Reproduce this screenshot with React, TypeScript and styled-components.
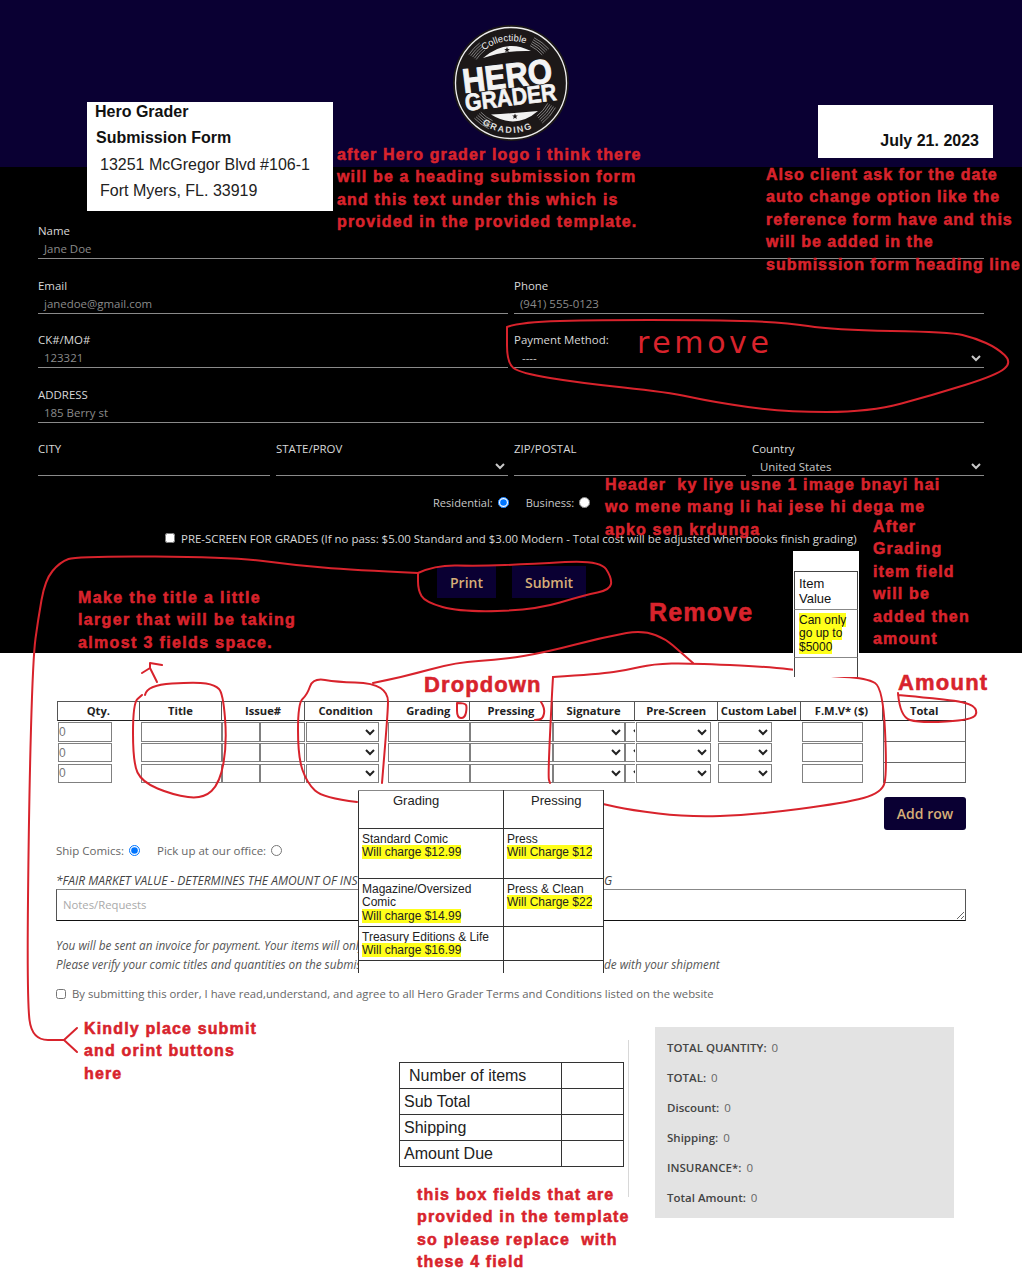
import React from "react";
import styled, { createGlobalStyle } from "styled-components";

const Global = createGlobalStyle`
  html, body { margin: 0; padding: 0; background: #fff; }
  * { box-sizing: border-box; }
`;

const UI = `"Open Sans", "Noto Sans", sans-serif`;
const ARIAL = `"Liberation Sans", Arial, sans-serif`;
const NAVY = "#0a0033";
const RED = "#d8232c";

const Page = styled.div`
  position: relative;
  width: 1022px;
  height: 1280px;
  overflow: hidden;
  font-family: ${UI};
`;
const Header = styled.header`
  height: 167px;
  background: ${NAVY};
  display: flex;
  justify-content: center;
  padding-top: 23px;
`;
const LogoSvg = styled.svg`
  width: 120px;
  height: 120px;
  display: block;
`;
const Dark = styled.section`
  height: 486px;
  background: #000;
  padding: 56px 38px 0;
  color: #d8d8d8;
  font-size: 11.45px;
`;
const Fields = styled.div`
  display: grid;
  grid-template-columns: repeat(4, 1fr);
  column-gap: 6px;
  row-gap: 18.5px;
`;
const Field = styled.div<{ $span: number }>`
  grid-column: span ${(p) => p.$span};
`;
const FieldLabel = styled.div`
  height: 16px;
  line-height: 16px;
  color: #d8d8d8;
`;
const FieldValue = styled.div<{ $short?: boolean }>`
  height: ${(p) => (p.$short ? 19 : 20)}px;
  line-height: 19px;
  padding-left: 6px;
  color: #8b8b8b;
  border-bottom: 1px solid #8a8a8a;
`;
const FieldSelect = styled.select<{ $short?: boolean }>`
  display: block;
  width: 100%;
  height: ${(p) => (p.$short ? 19 : 20)}px;
  padding: 0 0 0 4px;
  font: 11.45px ${UI};
  color: #c8c8c8;
  background: transparent;
  color-scheme: dark;
  border: none;
  border-bottom: 1px solid #8a8a8a;
  border-radius: 0;
  outline: none;
`;
const ChoiceRow = styled.div`
  display: flex;
  align-items: center;
  height: 16px;
  margin: 18px 0 0 395px;
  font-size: 11.1px;
  color: #c8c8c8;
`;
const Choice = styled.label`
  display: flex;
  align-items: center;
  margin-right: 17px;
`;
const Radio = styled.input.attrs({ type: "radio" })`
  width: 11px;
  height: 11px;
  margin: 0 0 0 5px;
`;
const PreScreen = styled.label`
  display: flex;
  align-items: center;
  height: 16px;
  margin: 20px 0 0 127px;
  color: #d8d8d8;
  white-space: nowrap;
`;
const Check = styled.input.attrs({ type: "checkbox" })`
  width: 10px;
  height: 10px;
  margin: 0 6px 0 0;
`;
const Buttons = styled.div`
  display: flex;
  gap: 16px;
  margin: 20px 0 0 399px;
`;
const DarkButton = styled.button`
  height: 32px;
  padding: 0 13px;
  background: ${NAVY};
  color: #d6ae78;
  border: none;
  font: 600 14px ${UI};
`;
const Light = styled.section`
  height: 627px;
  background: #fff;
  padding: 48px 56px 0;
  color: #555;
  font-size: 11.3px;
  display: flex;
  flex-direction: column;
`;
const ItemTable = styled.table`
  width: 909px;
  margin-left: 1px;
  table-layout: fixed;
  border-collapse: separate;
  border-spacing: 0;
`;
const Th = styled.th`
  height: 20px;
  padding: 0 0 1px;
  font: 700 11.2px ${UI};
  color: #222;
  text-align: center;
  border: 1px solid #555;
  border-left-width: 0;
  border-bottom-color: #222;
  &:first-child { border-left-width: 1px; }
`;
const Td = styled.td`
  height: 20.8px;
  padding: 0;
  vertical-align: top;
  overflow: hidden;
`;
const TotalTd = styled(Td)`
  border-left: 1px solid #666;
  border-right: 1px solid #666;
  border-bottom: 1px solid #666;
`;
const CellInner = styled.div<{ $inset?: number }>`
  display: flex;
  padding: 1px 0 0 ${(p) => p.$inset ?? 0}px;
`;
const CellInput = styled.input<{ $w?: number }>`
  display: block;
  flex: ${(p) => (p.$w ? `0 0 ${p.$w}px` : "1 1 0")};
  min-width: 0;
  height: 19.6px;
  padding: 0;
  border: 1px solid #808080;
  border-radius: 0;
  font: 12px ${ARIAL};
  color: #777;
  background: #fff;
`;
const CellSelect = styled.select<{ $w: number }>`
  display: block;
  flex: 0 0 ${(p) => p.$w}px;
  height: 19.6px;
  padding: 0;
  border: 1px solid #808080;
  border-radius: 0;
  background: #fff;
  color: #222;
  font: 11px ${UI};
`;
const AddRow = styled.button`
  align-self: flex-end;
  width: 82px;
  height: 33px;
  margin-top: 13.4px;
  background: ${NAVY};
  color: #d6ae78;
  border: none;
  border-radius: 3px;
  font: 600 14px ${UI};
`;
const ShipRow = styled.div`
  display: flex;
  align-items: center;
  height: 16px;
  margin-top: 13px;
  font-size: 11.5px;
  color: #666;
`;
const ShipChoice = styled.label`
  display: flex;
  align-items: center;
  margin-right: 17px;
`;
const FmvNote = styled.div`
  height: 16px;
  line-height: 16px;
  margin-top: 14px;
  font-size: 12px;
  font-style: italic;
  white-space: nowrap;
  color: #444;
`;
const Notes = styled.textarea`
  display: block;
  width: 910px;
  height: 32px;
  padding: 7px 6px;
  border: 1px solid #555;
  border-top-color: #888;
  border-bottom-color: #111;
  border-radius: 0;
  background: #fff;
  font: 11.3px ${UI};
  &::placeholder { color: #aaa; }
`;
const Terms = styled.p`
  margin: 15px 0 0;
  font-size: 11.75px;
  font-style: italic;
  line-height: 19px;
  color: #555;
  white-space: nowrap;
`;
const Agree = styled.label`
  display: flex;
  align-items: center;
  height: 16px;
  margin-top: 12px;
  color: #666;
  white-space: nowrap;
`;
const AgreeCheck = styled(Check)`
  margin: 0 6px 0 0;
`;
const Bottom = styled.div`
  display: flex;
  align-items: flex-start;
  margin-top: 25px;
  padding-left: 343px;
`;
const DueTable = styled.table`
  width: 225px;
  margin-top: 35px;
  table-layout: fixed;
  border-collapse: collapse;
  font: 16px ${ARIAL};
  color: #222;
`;
const DueLabel = styled.td<{ $indent?: boolean }>`
  width: 162px;
  height: 26px;
  padding: 2px 0 0 ${(p) => (p.$indent ? 9 : 4)}px;
  border: 1px solid #333;
`;
const DueValue = styled.td`
  border: 1px solid #333;
`;
const Divider = styled.div`
  width: 1px;
  height: 157px;
  margin: 13px 26px 0 4px;
  background: #d8d8d8;
`;
const Summary = styled.aside`
  width: 299px;
  height: 191px;
  padding: 13px 12px;
  background: #e3e3e3;
  display: flex;
  flex-direction: column;
  gap: 14px;
  font-size: 11.5px;
`;
const SummaryRow = styled.div`
  height: 16px;
  line-height: 16px;
  font-weight: 600;
  color: #444;
`;
const SummaryNum = styled.span`
  margin-left: 5px;
  font-weight: 400;
  color: #666;
`;
const Scribble = styled.svg`
  position: absolute;
  left: 0;
  top: 0;
  width: 1022px;
  height: 1280px;
  pointer-events: none;
`;
const Paper = styled.div<{ $x: number; $y: number; $w: number; $h: number }>`
  position: absolute;
  left: ${(p) => p.$x}px;
  top: ${(p) => p.$y}px;
  width: ${(p) => p.$w}px;
  height: ${(p) => p.$h}px;
  background: #fff;
  color: #111;
  font-family: ${ARIAL};
`;
const FirmLine = styled.div<{ $bold?: boolean; $pad: number }>`
  height: 26.3px;
  line-height: 20px;
  padding-left: ${(p) => p.$pad}px;
  font-size: 16px;
  font-weight: ${(p) => (p.$bold ? 700 : 400)};
  color: ${(p) => (p.$bold ? "#111" : "#222")};
`;
const DateText = styled.div`
  display: flex;
  justify-content: flex-end;
  align-items: flex-end;
  height: 100%;
  padding: 0 14px 8px 0;
  font-size: 16px;
  font-weight: 700;
`;
const ItemHead = styled.div`
  height: 39px;
  margin: 20px 1px 0 1px;
  padding: 4px 0 0 4px;
  font-size: 13px;
  line-height: 15px;
  border: 1px solid #444;
  border-bottom-color: #888;
`;
const ItemBody = styled.div`
  height: 48px;
  margin: 0 1px;
  padding: 4px 0 0 4px;
  font-size: 12px;
  line-height: 13.4px;
  border-left: 1px solid #444;
  border-right: 1px solid #444;
  border-bottom: 1px solid #888;
`;
const ItemTail = styled.div`
  height: 19px;
  margin: 0 1px;
  border-left: 1px solid #444;
  border-right: 1px solid #444;
`;
const Mark = styled.span`
  background: #ffff1a;
`;
const PriceTable = styled.table`
  width: 245px;
  table-layout: fixed;
  border-collapse: collapse;
  font: 12px/13.6px ${ARIAL};
  color: #222;
`;
const PriceHead = styled.td<{ $indent: number }>`
  height: 38px;
  padding: 3px 0 0 ${(p) => p.$indent}px;
  vertical-align: top;
  font-size: 13px;
  border: 1px solid #333;
  border-top-color: #888;
`;
const PriceCell = styled.td<{ $h: number; $open?: boolean }>`
  height: ${(p) => p.$h}px;
  padding: 3.5px 0 0 3px;
  vertical-align: top;
  border: 1px solid #333;
  ${(p) => (p.$open ? "border-bottom: none;" : "")}
`;
const Note = styled.div<{ $x: number; $y: number; $size?: number; $lh?: number; $track?: number }>`
  position: absolute;
  left: ${(p) => p.$x}px;
  top: ${(p) => p.$y}px;
  font: 700 ${(p) => p.$size ?? 16}px/${(p) => p.$lh ?? 22.4}px ${ARIAL};
  letter-spacing: ${(p) => p.$track ?? 1.15}px;
  -webkit-text-stroke: 0.55px ${RED};
  color: ${RED};
  white-space: pre;
`;
const HandNote = styled.div`
  position: absolute;
  left: 637px;
  top: 326px;
  font: 400 30px/34px "DejaVu Sans", sans-serif;
  letter-spacing: 3.6px;
  color: ${RED};
`;

const polar = (r: number, deg: number) => {
  const a = (deg * Math.PI) / 180;
  return `${(60 + r * Math.sin(a)).toFixed(2)} ${(60 - r * Math.cos(a)).toFixed(2)}`;
};
const arc = (r: number, a: number, b: number) => `M${polar(r, a)} A${r} ${r} 0 0 1 ${polar(r, b)}`;

const Star = ({ x, y }: { x: number; y: number }) => (
  <polygon
    fill="#1c1818"
    transform={`translate(${x} ${y}) scale(3)`}
    points="0,-1 .29,-.31 .95,-.31 .41,.12 .59,.81 0,.4 -.59,.81 -.41,.12 -.95,-.31 -.29,-.31"
  />
);

const Logo = () => {
  const hatch: [number, number][] = [
    [-56, -38],
    [27, 48],
    [119, 142],
    [-154, -134],
  ];
  return (
    <LogoSvg viewBox="0 0 120 120" role="img" aria-label="Collectible Hero Grader Grading">
      <defs>
        <path id="logoTop" d={arc(42, -52, 38)} />
        <path id="logoBottom" d="M21.7 92.1 A50 50 0 0 0 98.3 92.1" />
      </defs>
      <circle cx="60" cy="60" r="58" fill="#1c1818" />
      <circle cx="60" cy="60" r="55.5" fill="none" stroke="#eee" strokeWidth="1.3" />
      {hatch.map(([a, b]) =>
        [42, 44.2, 46.4, 48.6, 50.8].map((r) => (
          <path key={`${a}-${r}`} d={arc(r, a, b)} fill="none" stroke="#aaa" strokeWidth="0.7" />
        ))
      )}
      <path d="M32 35 Q55 15 80 28 Q55 27 32 35Z" fill="#f2f2f2" />
      <Star x={56} y={27} />
      <path d="M40 91.5 Q65 107 87 88 Q65 90 40 91.5Z" fill="#f2f2f2" />
      <Star x={64} y={93.5} />
      <text fill="#eee" fontFamily={ARIAL} fontSize="9.5" fontWeight="400">
        <textPath href="#logoTop" startOffset="9">Collectible</textPath>
      </text>
      <text fill="#ddd" fontFamily={ARIAL} fontSize="9" fontWeight="700" letterSpacing="1.6">
        <textPath href="#logoBottom" startOffset="13">GRADING</textPath>
      </text>
      <text
        x="13"
        y="70"
        transform="rotate(-7 13 70)"
        fill="#f4f4f4"
        stroke="#f4f4f4"
        strokeWidth="1"
        fontFamily={ARIAL}
        fontSize="34"
        fontWeight="700"
        textLength="90"
        lengthAdjust="spacingAndGlyphs"
      >
        HERO
      </text>
      <text
        x="15"
        y="88"
        transform="rotate(-7 15 88)"
        fill="#f4f4f4"
        stroke="#f4f4f4"
        strokeWidth="0.7"
        fontFamily={ARIAL}
        fontSize="24"
        fontWeight="700"
        textLength="92"
        lengthAdjust="spacingAndGlyphs"
      >
        GRADER
      </text>
    </LogoSvg>
  );
};

const line = (pts: number[][]) => {
  if (pts.length <= 3) return "M" + pts.map((p) => p.join(" ")).join(" L");
  let d = `M${pts[0][0]} ${pts[0][1]}`;
  for (let i = 1; i < pts.length - 1; i++) {
    const mx = (pts[i][0] + pts[i + 1][0]) / 2;
    const my = (pts[i][1] + pts[i + 1][1]) / 2;
    d += ` Q${pts[i][0]} ${pts[i][1]} ${mx} ${my}`;
  }
  const last = pts[pts.length - 1];
  return d + ` L${last[0]} ${last[1]}`;
};

const marks: number[][][] = [
  [[507,327],[520,322],[600,320],[700,320],[783,322],[833,330],[950,332],[975,338],[997,348],[1012,362],[997,375],[933,395],[870,412],[783,412],[713,402],[667,392],[580,383],[520,373],[507,363],[507,327]],
  [[418,573],[353,570],[293,565],[233,557],[77,556],[60,562],[45,580],[38,620],[33,657],[29,800],[27,1000],[32,1040],[64,1040]],
  [[77,1028],[64,1040],[77,1052]],
  [[418,573],[435,565],[480,566],[530,564],[600,560],[612,578],[610,590],[585,595],[535,610],[460,612],[425,602],[418,590],[418,573]],
  [[145,695],[147,685],[197,682],[215,685],[223,693],[227,743],[220,783],[203,799],[173,795],[142,782],[133,763],[133,703],[142,695]],
  [[157,682],[150,668],[142,673]],
  [[150,668],[150,663],[162,665]],
  [[357,802],[323,798],[307,783],[298,757],[298,703],[307,695],[313,678],[337,682],[373,683],[388,693],[388,710],[382,783]],
  [[373,683],[403,677],[457,662],[500,660],[547,652],[600,638],[653,628],[693,663]],
  [[553,677],[552,693],[548,777],[550,783]],
  [[553,677],[600,674],[627,670],[653,664],[690,663],[790,668],[822,676],[867,678],[883,688],[887,773],[882,793],[845,803],[753,815],[687,817],[630,810],[603,804]],
  [[457,703],[465,703],[467,707],[465,718],[457,718],[457,703]],
  [[541,702],[545,708],[543,719],[535,720]],
  [[898,693],[900,717],[920,723],[973,720],[978,710],[967,702],[920,697],[898,695]],
];

const Row = () => (
  <tr>
    <Td><CellInner $inset={1}><CellInput $w={54} defaultValue="0" /></CellInner></Td>
    <Td><CellInner $inset={1}><CellInput /></CellInner></Td>
    <Td><CellInner><CellInput $w={38} /><CellInput /></CellInner></Td>
    <Td><CellInner $inset={1}><CellSelect $w={73} /></CellInner></Td>
    <Td><CellInner><CellInput /></CellInner></Td>
    <Td><CellInner><CellInput /></CellInner></Td>
    <Td><CellInner><CellSelect $w={72} /><CellSelect $w={22} /></CellInner></Td>
    <Td><CellInner $inset={1}><CellSelect $w={75} /></CellInner></Td>
    <Td><CellInner><CellSelect $w={54} /></CellInner></Td>
    <Td><CellInner $inset={1}><CellInput $w={61} /></CellInner></Td>
    <TotalTd />
  </tr>
);

const heads = ["Qty.", "Title", "Issue#", "Condition", "Grading", "Pressing", "Signature", "Pre-Screen", "Custom Label", "F.M.V* ($)", "Total"];

export default function App() {
  return (
    <Page>
      <Global />
      <Header><Logo /></Header>
      <Dark>
        <Fields>
          <Field $span={4}><FieldLabel>Name</FieldLabel><FieldValue>Jane Doe</FieldValue></Field>
          <Field $span={2}><FieldLabel>Email</FieldLabel><FieldValue>janedoe@gmail.com</FieldValue></Field>
          <Field $span={2}><FieldLabel>Phone</FieldLabel><FieldValue>(941) 555-0123</FieldValue></Field>
          <Field $span={2}><FieldLabel>CK#/MO#</FieldLabel><FieldValue>123321</FieldValue></Field>
          <Field $span={2}>
            <FieldLabel>Payment Method:</FieldLabel>
            <FieldSelect><option>----</option></FieldSelect>
          </Field>
          <Field $span={4}><FieldLabel>ADDRESS</FieldLabel><FieldValue>185 Berry st</FieldValue></Field>
          <Field $span={1}><FieldLabel>CITY</FieldLabel><FieldValue $short /></Field>
          <Field $span={1}><FieldLabel>STATE/PROV</FieldLabel><FieldSelect $short /></Field>
          <Field $span={1}><FieldLabel>ZIP/POSTAL</FieldLabel><FieldValue $short /></Field>
          <Field $span={1}>
            <FieldLabel>Country</FieldLabel>
            <FieldSelect $short><option>United States</option></FieldSelect>
          </Field>
        </Fields>
        <ChoiceRow>
          <Choice>Residential: <Radio name="kind" defaultChecked /></Choice>
          <Choice>Business: <Radio name="kind" /></Choice>
        </ChoiceRow>
        <PreScreen>
          <Check />
          PRE-SCREEN FOR GRADES (If no pass: $5.00 Standard and $3.00 Modern - Total cost will be adjusted when books finish grading)
        </PreScreen>
        <Buttons>
          <DarkButton>Print</DarkButton>
          <DarkButton>Submit</DarkButton>
        </Buttons>
      </Dark>
      <Light>
        <ItemTable>
          <thead>
            <tr>{heads.map((h) => <Th key={h}>{h}</Th>)}</tr>
          </thead>
          <tbody><Row /><Row /><Row /></tbody>
        </ItemTable>
        <AddRow>Add row</AddRow>
        <ShipRow>
          <ShipChoice>Ship Comics: <Radio name="ship" defaultChecked /></ShipChoice>
          <ShipChoice>Pick up at our office: <Radio name="ship" /></ShipChoice>
        </ShipRow>
        <FmvNote>*FAIR MARKET VALUE - DETERMINES THE AMOUNT OF INSURANCE CHARGED FOR YOUR RETURN SHIPPING</FmvNote>
        <Notes placeholder="Notes/Requests" />
        <Terms>
          You will be sent an invoice for payment. Your items will only be shipped after payment is received.<br />
          Please verify your comic titles and quantities on the submission form and print a copy of this form to include with your shipment
        </Terms>
        <Agree>
          <AgreeCheck />
          By submitting this order, I have read,understand, and agree to all Hero Grader Terms and Conditions listed on the website
        </Agree>
        <Bottom>
          <DueTable>
            <tbody>
              <tr><DueLabel $indent>Number of items</DueLabel><DueValue /></tr>
              <tr><DueLabel>Sub Total</DueLabel><DueValue /></tr>
              <tr><DueLabel>Shipping</DueLabel><DueValue /></tr>
              <tr><DueLabel>Amount Due</DueLabel><DueValue /></tr>
            </tbody>
          </DueTable>
          <Divider />
          <Summary>
            <SummaryRow>TOTAL QUANTITY:<SummaryNum>0</SummaryNum></SummaryRow>
            <SummaryRow>TOTAL:<SummaryNum>0</SummaryNum></SummaryRow>
            <SummaryRow>Discount:<SummaryNum>0</SummaryNum></SummaryRow>
            <SummaryRow>Shipping:<SummaryNum>0</SummaryNum></SummaryRow>
            <SummaryRow>INSURANCE*:<SummaryNum>0</SummaryNum></SummaryRow>
            <SummaryRow>Total Amount:<SummaryNum>0</SummaryNum></SummaryRow>
          </Summary>
        </Bottom>
      </Light>

      <Scribble viewBox="0 0 1022 1280" fill="none" stroke={RED} strokeWidth="2" strokeLinejoin="round" strokeLinecap="round">
        {marks.map((m, i) => <path key={i} d={line(m)} />)}
      </Scribble>

      <Paper $x={87} $y={102} $w={246} $h={109}>
        <FirmLine $bold $pad={8}>Hero Grader</FirmLine>
        <FirmLine $bold $pad={9}>Submission Form</FirmLine>
        <FirmLine $pad={13}>13251 McGregor Blvd #106-1</FirmLine>
        <FirmLine $pad={13}>Fort Myers, FL. 33919</FirmLine>
      </Paper>
      <Paper $x={818} $y={105} $w={175} $h={53}>
        <DateText>July 21. 2023</DateText>
      </Paper>
      <Paper $x={793} $y={551} $w={66} $h={126}>
        <ItemHead>Item<br />Value</ItemHead>
        <ItemBody><Mark>Can only<br />go up to<br />$5000</Mark></ItemBody>
        <ItemTail />
      </Paper>
      <Paper $x={358} $y={790} $w={245} $h={182}>
        <PriceTable>
          <colgroup><col width="145" /><col width="100" /></colgroup>
          <tbody>
            <tr>
              <PriceHead $indent={34}>Grading</PriceHead>
              <PriceHead $indent={27}>Pressing</PriceHead>
            </tr>
            <tr>
              <PriceCell $h={50}>Standard Comic<br /><Mark>Will charge $12.99</Mark></PriceCell>
              <PriceCell $h={50}>Press<br /><Mark>Will Charge $12</Mark></PriceCell>
            </tr>
            <tr>
              <PriceCell $h={48}>Magazine/Oversized<br />Comic<br /><Mark>Will charge $14.99</Mark></PriceCell>
              <PriceCell $h={48}>Press &amp; Clean<br /><Mark>Will Charge $22</Mark></PriceCell>
            </tr>
            <tr>
              <PriceCell $h={34}>Treasury Editions &amp; Life<br /><Mark>Will charge $16.99</Mark></PriceCell>
              <PriceCell $h={34} />
            </tr>
            <tr>
              <PriceCell $h={12} $open />
              <PriceCell $h={12} $open />
            </tr>
          </tbody>
        </PriceTable>
      </Paper>

      <Note $x={337} $y={144}>{"after Hero grader logo i think there\nwill be a heading submission form\nand this text under this which is\nprovided in the provided template."}</Note>
      <Note $x={766} $y={164} $track={1}>{"Also client ask for the date\nauto change option like the\nreference form have and this\nwill be added in the\nsubmission form heading line"}</Note>
      <HandNote>remove</HandNote>
      <Note $x={605} $y={474}>{"Header  ky liye usne 1 image bnayi hai\nwo mene mang li hai jese hi dega me\napko sen krdunga"}</Note>
      <Note $x={873} $y={516}>{"After\nGrading\nitem field\nwill be\nadded then\namount"}</Note>
      <Note $x={78} $y={587} $track={1.35}>{"Make the title a little\nlarger that will be taking\nalmost 3 fields space."}</Note>
      <Note $x={649} $y={598} $size={25} $lh={28} $track={1.2}>Remove</Note>
      <Note $x={424} $y={672} $size={22} $lh={26} $track={1.1}>Dropdown</Note>
      <Note $x={898} $y={670} $size={22} $lh={26} $track={1.2}>Amount</Note>
      <Note $x={84} $y={1018}>{"Kindly place submit\nand orint buttons\nhere"}</Note>
      <Note $x={417} $y={1184}>{"this box fields that are\nprovided in the template\nso please replace  with\nthese 4 field"}</Note>
    </Page>
  );
}
